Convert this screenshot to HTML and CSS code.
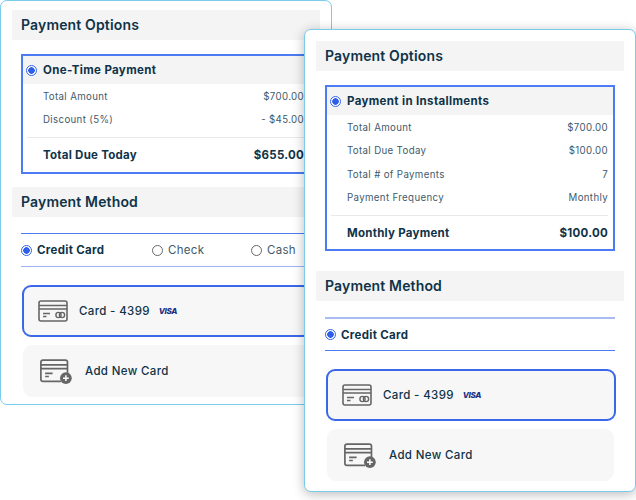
FILE: index.html
```html
<!DOCTYPE html>
<html lang="en">
<head>
    <meta charset="UTF-8">
    <meta name="viewport" content="width=device-width, initial-scale=1.0">
    <title>Payment Options</title>
    <link rel="stylesheet" href="styles.css">
</head>
<body>
    <svg class="defs" width="0" height="0">
        <symbol id="card" viewBox="0 0 30 22">
            <rect x="1" y="1" width="28" height="20" rx="2" fill="none" stroke="#666" stroke-width="1.6"/>
            <path d="M1 5.5h28M1 9h28" fill="none" stroke="#666" stroke-width="1.6"/>
            <path d="M5 13.5h7M5 16.5h3.5" fill="none" stroke="#666" stroke-width="1.5"/>
            <circle cx="20.5" cy="15" r="2.6" fill="none" stroke="#666" stroke-width="1.4"/>
            <circle cx="24" cy="15" r="2.6" fill="none" stroke="#666" stroke-width="1.4"/>
        </symbol>
        <symbol id="card-add" viewBox="3.2 0 30 23.5">
            <path d="M26 17V3a2 2 0 0 0-2-2H3a2 2 0 0 0-2 2v16a2 2 0 0 0 2 2h17" transform="translate(3 0)" fill="none" stroke="#666" stroke-width="1.6"/>
            <path d="M4 5.5h25M4 9h25" fill="none" stroke="#666" stroke-width="1.6"/>
            <path d="M8 13.5h7M8 16.5h3.5" fill="none" stroke="#666" stroke-width="1.5"/>
            <circle cx="27.5" cy="18" r="5.5" fill="#666"/>
            <path d="M27.5 15.3v5.4M24.8 18h5.4" stroke="#fff" stroke-width="1.4"/>
        </symbol>
    </svg>

    <div class="panel panel-back">
        <div class="section-title">Payment Options</div>
        <div class="option-box">
            <div class="option-head"><span class="radio on"></span>One-Time Payment</div>
            <div class="rows">
                <div class="row"><span>Total Amount</span><span>$700.00</span></div>
                <div class="row"><span>Discount (5%)</span><span>- $45.00</span></div>
            </div>
            <div class="total"><span>Total Due Today</span><span>$655.00</span></div>
        </div>
        <div class="section-title">Payment Method</div>
        <div class="methods">
            <label class="method active"><span class="radio on"></span>Credit Card</label>
            <label class="method check"><span class="radio"></span>Check</label>
            <label class="method cash"><span class="radio"></span>Cash</label>
        </div>
        <div class="card selected">
            <svg class="card-icon"><use href="#card"/></svg>
            <span>Card - 4399</span>
            <span class="visa">VISA</span>
        </div>
        <div class="card add">
            <svg class="add-icon"><use href="#card-add"/></svg>
            <span>Add New Card</span>
        </div>
    </div>

    <div class="panel panel-front">
        <div class="section-title">Payment Options</div>
        <div class="option-box">
            <div class="option-head"><span class="radio on"></span>Payment in Installments</div>
            <div class="rows">
                <div class="row"><span>Total Amount</span><span>$700.00</span></div>
                <div class="row"><span>Total Due Today</span><span>$100.00</span></div>
                <div class="row"><span>Total # of Payments</span><span>7</span></div>
                <div class="row"><span>Payment Frequency</span><span>Monthly</span></div>
            </div>
            <div class="total"><span>Monthly Payment</span><span>$100.00</span></div>
        </div>
        <div class="section-title">Payment Method</div>
        <div class="methods">
            <label class="method active"><span class="radio on"></span>Credit Card</label>
        </div>
        <div class="card selected">
            <svg class="card-icon"><use href="#card"/></svg>
            <span>Card - 4399</span>
            <span class="visa">VISA</span>
        </div>
        <div class="card add">
            <svg class="add-icon"><use href="#card-add"/></svg>
            <span>Add New Card</span>
        </div>
    </div>
</body>
</html>
```
FILE: styles.css
```css
html, body { margin: 0; padding: 0; background-color: #fff; }
body { position: relative; width: 636px; height: 500px; overflow: hidden; font-family: Inter, "Open Sans", sans-serif; color: #0f3348; }
.defs { position: absolute; }

/* the two overlapping windows */
.panel { position: absolute; box-sizing: border-box; width: 332px; padding: 9px 11px 0; background-color: #fff; border: 1px solid #7accec; border-radius: 7px; overflow: hidden; }
.panel-back { left: 0; top: 0; height: 405px; }
.panel-front { left: 304px; top: 29px; height: 463px; padding-top: 11px; box-shadow: 0 2px 12px rgba(0, 0, 0, .28); }

.section-title { height: 30px; padding-left: 9px; background-color: #f4f4f4; font-size: 14px; font-weight: 600; line-height: 29px; letter-spacing: .15px; }

.option-box { box-sizing: border-box; width: 290px; margin: 14px 0 13px 9px; border: 2px solid #4d7bf3; }
.panel-front .option-box { margin-bottom: 20px; }
.option-head { display: flex; align-items: center; height: 28px; padding-left: 3px; background-color: #f4f4f4; font-size: 11.5px; font-weight: 700; letter-spacing: .35px; }
.option-head .radio { margin-right: 6px; }

.rows { padding: .5px 5px 5.5px 20px; }
.row { display: flex; justify-content: space-between; align-items: center; height: 23.5px; font-size: 9.7px; letter-spacing: .35px; color: #3f5a6b; }

.total { display: flex; justify-content: space-between; align-items: center; height: 34px; margin: 0 5px 0 4px; padding-left: 16px; border-top: 1px solid #e9e9e9; font-size: 11.5px; font-weight: 700; letter-spacing: .25px; }
.panel-front .total { height: 33px; }

.radio { flex: none; box-sizing: border-box; width: 11px; height: 11px; margin-right: 5px; border: 1px solid #666; border-radius: 50%; background-color: #fff; }
.radio.on { border-color: #3464e8; background: radial-gradient(circle, #2f5fe8 0 3px, #fff 3.5px); }

.methods { display: flex; align-items: center; box-sizing: border-box; width: 290px; height: 34px; margin: 16px 0 18px 9px; border-top: 1px solid #4d7bf3; border-bottom: 1px solid #9db3f5; }
.panel-front .methods { border-top: 2px solid #a9bbf3; border-bottom: 1px solid #4d7bf3; }
.method { display: flex; align-items: center; font-size: 11.5px; letter-spacing: .3px; color: #3f5a6b; }
.method.active { width: 131px; font-weight: 700; color: #0f3348; }
.method.check { width: 99px; }

.card { display: flex; align-items: center; box-sizing: border-box; width: 290px; height: 52px; margin-left: 10px; font-size: 11.5px; font-weight: 500; letter-spacing: .35px; background-color: #f7f7f7; border-radius: 9px; }
.card.selected { border: 2px solid #3a68e8; padding-left: 14px; }
.card.add { width: 287px; margin: 8px 0 0 11px; padding-left: 16px; }
.card-icon { width: 30px; height: 22px; margin-right: 11px; }
.add-icon { width: 32px; height: 25px; margin-right: 13px; margin-left: 1px; }
.visa { margin-left: 9px; font-size: 8px; font-weight: 800; font-style: italic; letter-spacing: -.4px; color: #1d2f85; }
```
